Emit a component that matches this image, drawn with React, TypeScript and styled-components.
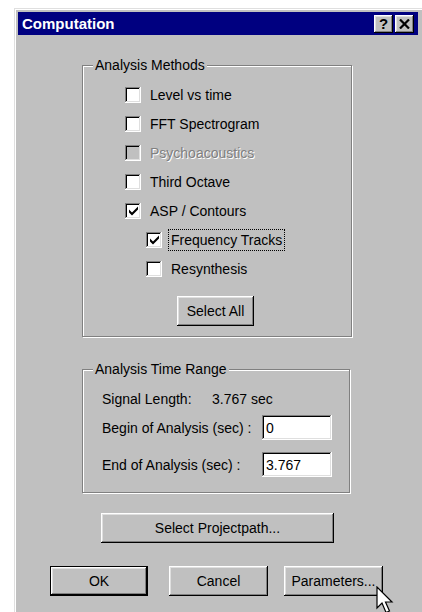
import React from 'react';
import styled, { createGlobalStyle, css } from 'styled-components';

const GlobalStyle = createGlobalStyle`
    html, body {
        margin: 0;
        background: #ffffff;
        overflow: hidden;
    }
    body {
        font-family: "Liberation Sans", Arial, sans-serif;
        font-size: 14px;
        color: #000;
    }
`

const raised = css`
    box-shadow: inset -1px -1px #000, inset 1px 1px #fff, inset -2px -2px #808080, inset 2px 2px #dfdfdf;
`
const sunken = css`
    box-shadow: inset -1px -1px #fff, inset 1px 1px #808080, inset -2px -2px #dfdfdf, inset 2px 2px #000;
`

const Window = styled.div`
    position: relative;
    margin: 8px 0 0 14px;
    width: 420px;
    height: 620px;
    padding: 4px 8px 0 4px;
    box-sizing: border-box;
    background: #c0c0c0;
    box-shadow: inset 1px 1px #dfdfdf, inset 2px 2px #fff;
    display: flex;
    flex-direction: column;
    align-items: flex-start;
`
const TitleBar = styled.div`
    width: 400px;
    height: 23px;
    box-sizing: border-box;
    background: #000080;
    display: flex;
    align-items: center;
    justify-content: space-between;
    padding: 0 4px 0 4px;
`
const Title = styled.span`
    color: #fff;
    font-weight: bold;
    font-size: 15px;
`
const CaptionButtons = styled.div`
    display: flex;
    gap: 2px;
`
const CaptionButton = styled.div`
    width: 19px;
    height: 18px;
    background: #c0c0c0;
    ${raised};
    display: flex;
    align-items: center;
    justify-content: center;
    font-weight: bold;
    font-size: 15px;
    line-height: 1;
`
const Group = styled.fieldset<{ $top: number; $width: number }>`
    margin: ${p => p.$top}px 0 0 64px;
    width: ${p => p.$width}px;
    box-sizing: border-box;
    min-width: 0;
    padding: 0;
    border: 1px solid #808080;
    box-shadow: 1px 1px 0 #fff, inset 1px 1px 0 #fff;
`
const Legend = styled.legend`
    margin-left: 10px;
    padding: 0 2px;
    line-height: 16px;
    background: #c0c0c0;
`
const MethodList = styled.div`
    display: flex;
    flex-direction: column;
    padding: 7px 0 10px;
`
const CheckRow = styled.div<{ $indent: number }>`
    height: 29px;
    display: flex;
    align-items: center;
    gap: 6px;
    padding-left: ${p => p.$indent}px;
`
const Box = styled.div<{ $disabled?: boolean }>`
    width: 16px;
    height: 16px;
    flex: none;
    background: ${p => (p.$disabled ? '#c0c0c0' : '#fff')};
    ${sunken};
    display: flex;
    align-items: center;
    justify-content: center;
`
const CheckLabel = styled.span<{ $disabled?: boolean; $focused?: boolean }>`
    padding: 2px 2px;
    line-height: 16px;
    border: 1px ${p => (p.$focused ? 'dotted #000' : 'solid transparent')};
    color: ${p => (p.$disabled ? '#808080' : '#000')};
    text-shadow: ${p => (p.$disabled ? '1px 1px 0 #fff' : 'none')};
`
const Button = styled.div<{ $width: number; $default?: boolean }>`
    width: ${p => p.$width}px;
    height: 30px;
    box-sizing: border-box;
    background: #c0c0c0;
    display: flex;
    align-items: center;
    justify-content: center;
    ${raised};
    ${p => p.$default && css`
        border: 1px solid #000;
    `}
`
const SelectAll = styled(Button)`
    margin: 13px 0 0 94px;
`
const RangeBody = styled.div`
    display: flex;
    flex-direction: column;
    padding: 11px 0 15px 19px;
`
const InfoRow = styled.div`
    height: 22px;
    display: flex;
    align-items: center;
`
const FieldRow = styled.div<{ $gap: number }>`
    display: flex;
    align-items: center;
    margin-top: ${p => p.$gap}px;
`
const FieldLabel = styled.span<{ $width: number }>`
    width: ${p => p.$width}px;
    flex: none;
`
const TextBox = styled.div`
    width: 70px;
    height: 25px;
    box-sizing: border-box;
    padding: 0 4px;
    background: #fff;
    ${sunken};
    display: flex;
    align-items: center;
`
const PathButton = styled(Button)`
    margin: 20px 0 0 83px;
`
const ButtonRow = styled.div`
    display: flex;
    gap: 16px;
    margin: 23px 0 0 32px;
`
const Pointer = styled.svg`
    position: absolute;
    left: 362px;
    top: 578px;
`

type MethodType = {
    label: string,
    checked?: boolean,
    disabled?: boolean,
    nested?: boolean,
    focused?: boolean,
}

const methods: MethodType[] = [
    { label: 'Level vs time' },
    { label: 'FFT Spectrogram' },
    { label: 'Psychoacoustics', disabled: true },
    { label: 'Third Octave' },
    { label: 'ASP / Contours', checked: true },
    { label: 'Frequency Tracks', checked: true, nested: true, focused: true },
    { label: 'Resynthesis', nested: true },
]

// chunky win95 style tick
const Tick = () => (
    <svg width="11" height="10" viewBox="0 0 11 10">
        <path d="M1 3.5 L4 6.5 L10 0.5 L10 3.5 L4 9.5 L1 6.5 Z" fill="#000" />
    </svg>
)

const App: React.FC = () => {
    return (
        <>
            <GlobalStyle />
            <Window>
                <TitleBar>
                    <Title>Computation</Title>
                    <CaptionButtons>
                        <CaptionButton>?</CaptionButton>
                        <CaptionButton>
                            <svg width="11" height="10" viewBox="0 0 11 10">
                                <path d="M1 0.5 L10 9.5 M10 0.5 L1 9.5" stroke="#000" strokeWidth="2.2" />
                            </svg>
                        </CaptionButton>
                    </CaptionButtons>
                </TitleBar>

                <Group $top={22} $width={270}>
                    <Legend>Analysis Methods</Legend>
                    <MethodList>
                        {methods.map(m => (
                            <CheckRow key={m.label} $indent={m.nested ? 63 : 42}>
                                <Box $disabled={m.disabled}>{m.checked && <Tick />}</Box>
                                <CheckLabel $disabled={m.disabled} $focused={m.focused}>{m.label}</CheckLabel>
                            </CheckRow>
                        ))}
                        <SelectAll $width={77}>Select All</SelectAll>
                    </MethodList>
                </Group>

                <Group $top={24} $width={268}>
                    <Legend>Analysis Time Range</Legend>
                    <RangeBody>
                        <InfoRow>
                            <FieldLabel $width={110}>Signal Length:</FieldLabel>
                            <span>3.767 sec</span>
                        </InfoRow>
                        <FieldRow $gap={5}>
                            <FieldLabel $width={160}>Begin of Analysis (sec) :</FieldLabel>
                            <TextBox>0</TextBox>
                        </FieldRow>
                        <FieldRow $gap={12}>
                            <FieldLabel $width={160}>End of Analysis (sec) :</FieldLabel>
                            <TextBox>3.767</TextBox>
                        </FieldRow>
                    </RangeBody>
                </Group>

                <PathButton $width={233}>Select Projectpath...</PathButton>

                <ButtonRow>
                    <Button $width={98} $default style={{ marginRight: 5 }}>OK</Button>
                    <Button $width={99}>Cancel</Button>
                    <Button $width={99}>Parameters...</Button>
                </ButtonRow>

                <Pointer width="18" height="28" viewBox="0 0 18 28">
                    <path d="M1 1 L1 22 L6 17 L10 26.5 L13.5 25 L9.5 16 L16 16 Z" fill="#fff" stroke="#000" strokeWidth="1.2" strokeLinejoin="miter" />
                </Pointer>
            </Window>
        </>
    );
};

export default App;
